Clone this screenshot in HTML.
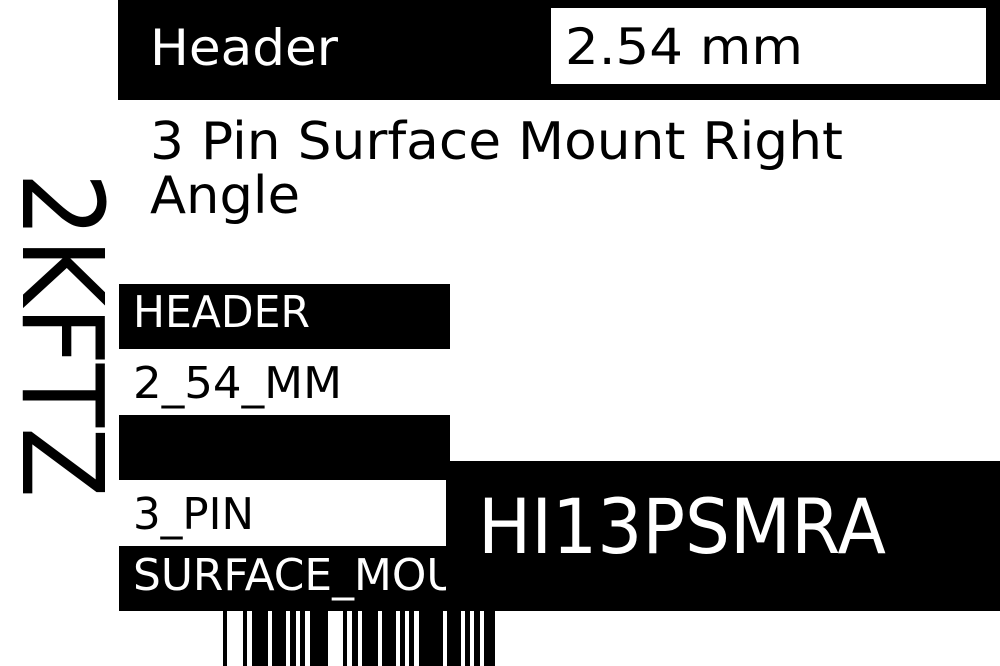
<!DOCTYPE html>
<html><head><style>
html,body{margin:0;padding:0;background:#fff;width:1000px;height:666px;overflow:hidden}
svg{display:block}
text{font-family:"DejaVu Sans","Liberation Sans",sans-serif}
</style></head><body>
<svg width="1000" height="666" viewBox="0 0 1000 666" xmlns="http://www.w3.org/2000/svg">
<rect x="118" y="0" width="882" height="100" fill="#000"/>
<rect x="551" y="8" width="435" height="76" fill="#fff"/>
<text x="150" y="65" font-size="50" fill="#fff" textLength="188" lengthAdjust="spacingAndGlyphs">Header</text>
<text x="565" y="64" font-size="50" fill="#000" textLength="238" lengthAdjust="spacingAndGlyphs">2.54 mm</text>
<text x="150" y="159" font-size="52" fill="#000" textLength="693" lengthAdjust="spacingAndGlyphs">3 Pin Surface Mount Right</text>
<text x="150" y="213" font-size="52" fill="#000" textLength="150" lengthAdjust="spacingAndGlyphs">Angle</text>

<g transform="translate(22,172) rotate(90)">
<text x="0" y="0" font-size="112" fill="#000" textLength="326" lengthAdjust="spacingAndGlyphs" transform="translate(0,-1)">2KFTZ</text>
</g>

<rect x="119" y="284" width="331" height="65" fill="#000"/>
<text x="133" y="327" font-size="44" fill="#fff" textLength="177" lengthAdjust="spacingAndGlyphs">HEADER</text>
<text x="133" y="398" font-size="44" fill="#000" textLength="209" lengthAdjust="spacingAndGlyphs">2_54_MM</text>
<rect x="119" y="415" width="331" height="65" fill="#000"/>
<text x="133" y="529" font-size="44" fill="#000" textLength="121" lengthAdjust="spacingAndGlyphs">3_PIN</text>
<rect x="119" y="546" width="331" height="65" fill="#000"/>
<text x="133" y="590" font-size="44" fill="#fff" textLength="385" lengthAdjust="spacingAndGlyphs">SURFACE_MOUNT</text>
<rect x="446" y="461" width="554" height="150" fill="#000"/>
<text x="478" y="553" font-size="76" fill="#fff" textLength="408" lengthAdjust="spacingAndGlyphs">HI13PSMRA</text>

<g fill="#000">
<rect x="223" y="611" width="4" height="55"/>
<rect x="243" y="611" width="4" height="55"/>
<rect x="252" y="611" width="16" height="55"/>
<rect x="272" y="611" width="14" height="55"/>
<rect x="290" y="611" width="6" height="55"/>
<rect x="300" y="611" width="5" height="55"/>
<rect x="310" y="611" width="18" height="55"/>
<rect x="343" y="611" width="4" height="55"/>
<rect x="352" y="611" width="6" height="55"/>
<rect x="362" y="611" width="16" height="55"/>
<rect x="382" y="611" width="14" height="55"/>
<rect x="400" y="611" width="5" height="55"/>
<rect x="409" y="611" width="5" height="55"/>
<rect x="419" y="611" width="24" height="55"/>
<rect x="447" y="611" width="14" height="55"/>
<rect x="465" y="611" width="5" height="55"/>
<rect x="474" y="611" width="6" height="55"/>
<rect x="484" y="611" width="11" height="55"/>
</g>
</svg>
</body></html>
